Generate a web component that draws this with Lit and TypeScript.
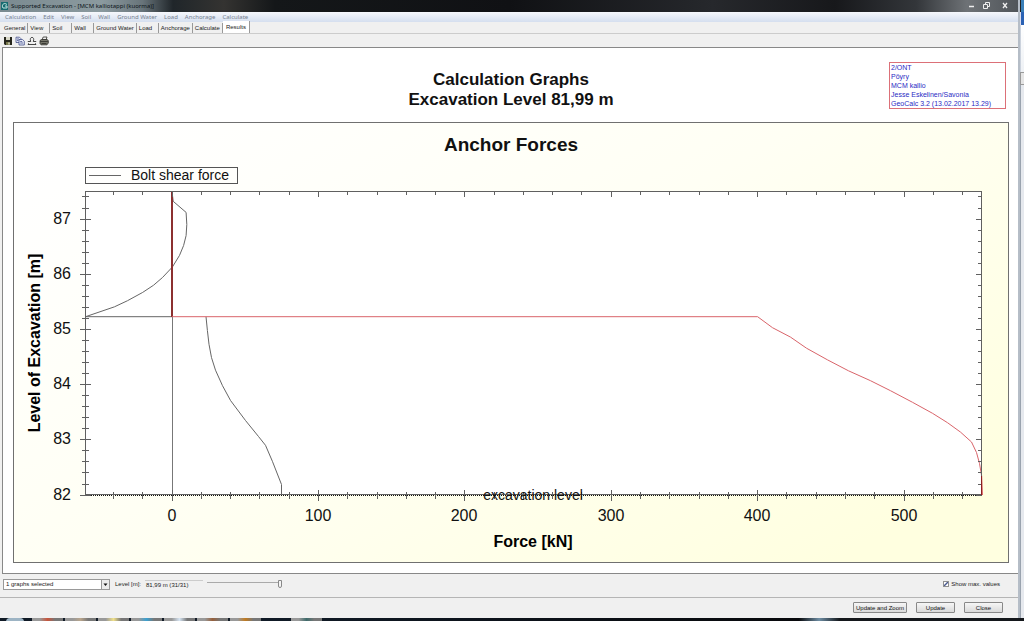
import { LitElement, html, svg, css } from "lit";
import { customElement, property, state } from "lit/decorators.js";
import { classMap } from "lit/directives/class-map.js";

type Point = [number, number];

const MENU = ["Calculation", "Edit", "View", "Soil", "Wall", "Ground Water", "Load", "Anchorage", "Calculate"];
const TABS = ["General", "View", "Soil", "Wall", "Ground Water", "Load", "Anchorage", "Calculate", "Results"];
const PROJECT = ["2/ONT", "Pöyry", "MCM kallio", "Jesse Eskelinen/Savonia", "GeoCalc 3.2 (13.02.2017 13.29)"];

/* Every point is [force in kN, level in m]. */
const SHEAR_UPPER: Point[] = [
  [0, 87.5], [0.8, 87.32], [9.6, 87.12], [10.1, 86.9], [9.6, 86.7], [7.9, 86.52], [5.1, 86.34],
  [0.3, 86.13], [-6.5, 85.94], [-12.6, 85.8], [-20, 85.67], [-30.4, 85.52], [-39.3, 85.41],
  [-59, 85.23], [0, 85.23],
];
const SHEAR_LOWER: Point[] = [
  [23.2, 85.23], [24.2, 84.98], [25.3, 84.73], [27, 84.49], [29.7, 84.26], [34.5, 83.98], [40, 83.71],
  [50.2, 83.35], [59.1, 83.06], [63.9, 82.9], [68.6, 82.61], [74.8, 82.19], [74.8, 82],
];
const ANCHOR_LIMIT: Point[] = [
  [0, 85.23], [400, 85.23], [410.2, 85.03], [422.5, 84.86], [433.4, 84.66], [447.7, 84.45],
  [462.1, 84.25], [477.1, 84.07], [490.8, 83.89], [505.8, 83.68], [519.5, 83.48], [529.7, 83.31],
  [538.6, 83.14], [546.1, 82.96], [549.5, 82.77], [551.6, 82.57], [553.1, 82.34], [553.6, 82],
];

const LEFT = 71;
const RIGHT = 968;
const TOP = 7;
const BOTTOM = 310;
const px = (kn: number) => Math.round((158 + kn * 1.464) * 10) / 10;
const py = (m: number) => Math.round((BOTTOM - (m - 82) * 55.2) * 10) / 10;
const line = (points: Point[]) => points.map(([kn, m]) => `${px(kn)},${py(m)}`).join(" ");
const snap = (n: number) => Math.round(n - 0.5);

@customElement("force-chart")
export class ForceChart extends LitElement {
  static styles = css`
    :host { display: block; }
    .plot { display: block; width: 100%; height: auto; font-family: "Liberation Sans", Arial, sans-serif; }
    .area { fill: #fff; }
    .axis { stroke: #606060; fill: none; shape-rendering: crispEdges; }
    .zero { stroke: #777; shape-rendering: crispEdges; }
    .base { stroke: #111; stroke-dasharray: 1 1; shape-rendering: crispEdges; }
    .shear { fill: none; stroke: #666; }
    .limit { fill: none; stroke: #d9646a; }
    .wall { stroke: #8c3030; stroke-width: 2; shape-rendering: crispEdges; }
    .end { stroke: #8c2020; shape-rendering: crispEdges; }
    .tick { font-size: 16px; fill: #111; }
    .name { font-size: 16px; font-weight: bold; fill: #000; text-anchor: middle; }
    .note { font-size: 14px; fill: #111; text-anchor: middle; }
    .x { text-anchor: middle; }
    .y { text-anchor: end; }
  `;

  private xTicks() {
    const out = [];
    for (let kn = -40; kn <= 540; kn += 20) {
      const major = kn % 100 === 0;
      const at = snap(px(kn)) + 0.5;
      const r = major ? 5 : 3;
      out.push(svg`<path class="axis" d="M${at} ${BOTTOM - r}V${BOTTOM + r + 1}M${at} ${TOP}v${major ? 5 : 3}" />`);
      if (major) out.push(svg`<text class="tick x" x=${snap(px(kn))} y="336">${kn}</text>`);
    }
    return out;
  }

  private yTicks() {
    const out = [];
    for (let i = 0; i <= 27; i++) {
      const m = 82 + i / 5;
      const major = i % 5 === 0;
      const at = snap(py(m)) + 0.5;
      const r = major ? 5 : 3;
      out.push(svg`<path class="axis" d="M${LEFT - r} ${at}H${LEFT + r + 1}M${RIGHT} ${at}h${-r - 1}" />`);
      if (major) out.push(svg`<text class="tick y" x="57" y=${snap(py(m)) + 5}>${m}</text>`);
    }
    return out;
  }

  render() {
    return html`
      <svg class="plot" viewBox="0 0 994 377" role="img" aria-label="Anchor Forces">
        <rect class="area" x=${LEFT} y=${TOP} width=${RIGHT - LEFT} height=${BOTTOM - TOP} />
        <path class="zero" d="M158 ${TOP}V${BOTTOM}" />
        <polyline class="shear" points=${line(SHEAR_UPPER)} />
        <polyline class="shear" points=${line(SHEAR_LOWER)} />
        <path class="wall" d="M158 ${TOP}V${py(85.23)}" />
        <polyline class="limit" points=${line(ANCHOR_LIMIT)} />
        <path class="axis" d="M${LEFT + 0.5} ${BOTTOM}V${TOP - 0.5}H${RIGHT - 0.5}V${BOTTOM}" />
        <path class="axis" d="M${LEFT} ${BOTTOM - 0.5}H${RIGHT}" />
        <path class="base" d="M${LEFT} ${BOTTOM + 0.5}H${RIGHT}" />
        ${this.xTicks()} ${this.yTicks()}
        <path class="end" d="M${RIGHT - 0.5} ${py(82.34)}V${BOTTOM}" />
        <text class="note" x="519" y="315">excavation level</text>
        <text class="name" x="519" y="362">Force [kN]</text>
        <text class="name" transform="translate(26 158) rotate(-90)">Level of Excavation [m]</text>
      </svg>
    `;
  }
}

@customElement("tool-bar")
export class ToolBar extends LitElement {
  static styles = css`
    :host { display: flex; align-items: center; gap: 2px; height: 13px; padding: 0 3px; }
    .tool { display: block; width: 10px; height: 10px; padding: 0; border: 0; background: none; }
    .glyph { display: block; width: 10px; height: 10px; }
  `;

  render() {
    return html`
      <button class="tool" aria-label="Save">
        <svg class="glyph" viewBox="0 0 10 10">
          <path d="M1 1h8v8H2L1 8z" fill="#26261c" />
          <path d="M3 1h4v3H3z" fill="#d8d8c8" />
          <path d="M3 6h4v3H3z" fill="#77774a" /><path d="M5.500 6.500h1v2h-1z" fill="#fff" />
        </svg>
      </button>
      <button class="tool" aria-label="Copy">
        <svg class="glyph" viewBox="0 0 10 10" fill="#e8ebf8" stroke="#45508c" stroke-width=".8">
          <path d="M1 1.200h3.500L6 2.700V6.500H1z" /><path d="M4 3.500h3.500L9.300 5.200V9H4z" />
          <path d="M2 3h2M2 4.500h1.500M5.200 5.500h2M5.200 7h3" />
        </svg>
      </button>
      <button class="tool" aria-label="Scale">
        <svg class="glyph" viewBox="0 0 10 10" fill="none" stroke="#333">
          <path d="M3.700 5.500C1.500 0 8.500 0 6.300 5.500M.8 5.500h3M6.200 5.500h3M.8 8.500h8.400M1.500 7.300v1.500M8.500 7.300v1.500" stroke-width=".9" />
        </svg>
      </button>
      <button class="tool" aria-label="Print">
        <svg class="glyph" viewBox="0 0 10 10" stroke="#2d2d28" stroke-width=".8">
          <path d="M3 4l1.200-3H8L7 4z" fill="#eee" />
          <path d="M1 4.500L2.500 3.500H8l1.300 1V7L8 8.800H2L1 7.500z" fill="#77776c" />
          <path d="M1.300 5.500h7.500M2.500 7.500h5" />
        </svg>
      </button>
    `;
  }
}

@customElement("option-bar")
export class OptionBar extends LitElement {
  @property({ type: Number }) level = 31;

  static styles = css`
    :host { display: flex; align-items: center; gap: 4px; height: 20px; padding: 0 18px 3px 3px; border-bottom: 1px solid #b5b5b5; font-size: 6px; line-height: 8px; }
    .pick { display: grid; width: 107px; height: 11px; }
    .list { grid-area: 1 / 1; appearance: none; width: 100%; height: 11px; padding: 0 10px 0 2px; margin: 0; border: 1px solid #999; border-radius: 0; background: #fff; color: #222; font: inherit; }
    .arrow { grid-area: 1 / 1; justify-self: end; width: 9px; height: 11px; pointer-events: none; }
    .label { padding-left: 1px; }
    .value { width: 56px; padding: 0 1px; border-top: 1px solid #ccc; }
    .range { appearance: none; width: 75px; height: 10px; margin: 0; background: linear-gradient(#aaa, #aaa) 0 3px / 100% 1px no-repeat; }
    .range::-webkit-slider-thumb { appearance: none; width: 4px; height: 8px; border: 1px solid #888; border-radius: 0 0 2px 2px; background: #f4f4f4; box-sizing: border-box; }
    .max { display: flex; align-items: center; gap: 2px; margin-left: auto; }
    .box { appearance: none; width: 6px; height: 6px; margin: 0; border: 1px solid #909090; background: #fff; }
    .box:checked { background: linear-gradient(135deg, #fff 30%, #4a5a90 45%, #4a5a90 55%, #fff 70%); }
  `;

  render() {
    return html`
      <div class="pick">
        <select class="list" aria-label="Graphs"><option>1 graphs selected</option></select>
        <svg class="arrow" viewBox="0 0 9 11">
          <rect x=".5" y=".5" width="8" height="10" fill="#ececec" stroke="#999" />
          <path d="M2.500 4.500h4L4.500 7z" fill="#111" />
        </svg>
      </div>
      <label class="label" for="level">Level [m]:</label>
      <output class="value" for="level">81,99 m (${this.level}/31)</output>
      <input class="range" id="level" type="range" min="1" max="31" .value=${String(this.level)}
        @input=${(e: Event) => (this.level = Number((e.target as HTMLInputElement).value))} />
      <label class="max"><input class="box" type="checkbox" checked />Show max. values</label>
    `;
  }
}

@customElement("app-root")
export class AppRoot extends LitElement {
  @state() private tab = "Results";

  static styles = css`
    :host { display: grid; grid-template-columns: minmax(0, 1fr) 6px; grid-template-rows: minmax(0, 1fr) auto; min-height: 100vh; background: #f0f0f0; color: #222; font-family: "Liberation Sans", Arial, sans-serif; font-size: 6px; line-height: 8px; }
    .window { display: flex; flex-direction: column; min-width: 0; }
    .title { display: flex; align-items: center; gap: 3px; height: 12px; padding-left: 1px; color: #0c1418; background: linear-gradient(90deg, #7a8a90 0, #8b9a9f 10%, #68747a 14%, #20262a 17%, #343331 22%, #141719 27%, #101114 50%, #26282c 70%, #17181b 82%, #33363a 90%, #6e7276 95%, #50555a 100%); }
    .logo { width: 7px; height: 8px; }
    .caption { flex: 1; font-family: "Noto Sans", sans-serif; font-size: 6px; font-weight: normal; margin: 0; }
    .controls { display: flex; padding-right: 5px; }
    .control { width: 16px; height: 11px; padding: 0; border: 0; background: none; }
    .control svg { display: block; width: 16px; height: 11px; }
    .menu { display: flex; align-items: center; gap: 7px; height: 10px; padding-left: 5px; background: linear-gradient(#f6f8fc, #d5dfef); font-family: "Noto Sans", sans-serif; }
    .entry { padding: 0; border: 0; background: none; color: #75808f; font: inherit; }
    .tabs { display: flex; align-items: flex-end; height: 12px; padding-left: 2px; border-bottom: 1px solid #ccc; box-sizing: border-box; }
    .tab { min-width: 22px; height: 10px; padding: 0 2px; border: 0; border-right: 1px solid #999; background: none; color: #222; font: inherit; text-align: left; }
    .current { height: 12px; padding: 0 3px; background: #fff; }
    .page { flex: 1; display: flex; flex-direction: column; margin-left: 2px; padding: 14px 9px 10px 10px; background: #fff; border: 1px solid #888; border-width: 1px 0 1px 1px; }
    .head { display: grid; grid-template-columns: 1fr auto 1fr; align-items: start; padding: 0 3px 12px; }
    .heading { grid-column: 2; margin: 0; padding-top: 8px; color: #111; font-size: 17px; line-height: 20px; text-align: center; }
    .project { justify-self: end; box-sizing: border-box; width: 117px; margin: 0; padding: 0 1px; border: 1px solid #dc7078; color: #2a2ac4; font-size: 7px; font-style: normal; line-height: 9px; white-space: nowrap; }
    .panel { margin: 0; border: 1px solid #707070; background: linear-gradient(150deg, #fff 5%, #fffff4 45%, #ffffe0 90%); }
    .subject { margin: 0; padding: 10px 0; color: #111; font-size: 19px; line-height: 24px; text-align: center; }
    .legend { display: flex; align-items: center; gap: 10px; width: fit-content; margin: 0 71px 1px; padding: 0 8px 0 3px; border: 1px solid #555; color: #111; font-size: 14px; line-height: 15px; }
    .swatch { width: 32px; border-top: 1px solid #666; }
    .actions { display: flex; justify-content: flex-end; gap: 9px; padding: 4px 15px 5px; }
    .action { min-width: 39px; height: 11px; padding: 0 2px; border: 1px solid #888; border-radius: 1px; background: linear-gradient(#f6f6f6, #dadada); color: #111; font: inherit; line-height: 8px; }
    .edge { display: grid; grid-template-rows: 12px 13px 47px 13px 1fr; border-left: 2px solid #b5bdc7; }
    .dark { background: #3a7fb8; border-left: 1px solid #222; }
    .blue { background: #2b62b4; border-left: 1px solid #dde; }
    .pale { background: linear-gradient(#fff, #eef1f5); border-left: 1px solid #ccd3dd; }
    .thumb { background: #e5e5e5; border: 1px solid #999; border-right: 0; }
    .rail { background: #e6e9ee; border-left: 1px solid #9aa3ae; }
    .taskbar { grid-column: 1 / -1; display: flex; gap: 2px; height: 4px; padding-left: 6px; background: linear-gradient(90deg, #101a26 0 26%, #08090c 78%, #6f8ea4 80%, #14171b 82%); }
    .start { width: 18px; margin-right: 6px; border-radius: 9px 9px 0 0; background: #9db4c4; }
    .task { width: 31px; background: linear-gradient(90deg, #999 25%, var(--tint), #777 75%); }
    .red { --tint: #c8553c; } .sand { --tint: #b9a58c; } .yellow { --tint: #f0e08a; }
    .sky { --tint: #3ba0d0; } .ice { --tint: #d6e4f2; } .rust { --tint: #96603c; }
    .orange { --tint: #c07a20; } .teal { --tint: #3f6b6b; margin-left: 28px; }
  `;

  render() {
    return html`
      <div class="window">
        <header class="title">
          <svg class="logo" viewBox="0 0 7 8"><path d="M0 0h7v8H0z" fill="#176b70" /><path d="M6 2.500C3 0 0 3 2 6h4V4H4" fill="none" stroke="#bfe4df" /></svg>
          <h1 class="caption">Supported Excavation - [MCM kalliotappi (kuorma)]</h1>
          <div class="controls">
            <button class="control" aria-label="Minimize"><svg viewBox="0 0 16 11"><path d="M4 5.500h5" stroke="#eee" stroke-width="1.500" /></svg></button>
            <button class="control" aria-label="Restore"><svg viewBox="0 0 16 11" fill="none" stroke="#eee"><path d="M2.500 3.500h4v4h-4zM4.500 3V1.500h4v4H7" /></svg></button>
            <button class="control" aria-label="Close window"><svg viewBox="0 0 16 11"><path d="M6 2l4 5M10 2l-4 5" stroke="#eee" stroke-width="1.300" /></svg></button>
          </div>
        </header>
        <nav class="menu">${MENU.map((name) => html`<button class="entry">${name}</button>`)}</nav>
        <div class="tabs" role="tablist">
          ${TABS.map((name) => html`<button role="tab" aria-selected=${this.tab === name}
            class=${classMap({ tab: true, current: this.tab === name })}
            @click=${() => (this.tab = name)}>${name}</button>`)}
        </div>
        <tool-bar></tool-bar>
        <main class="page">
          <div class="head">
            <h2 class="heading">Calculation Graphs<br />Excavation Level 81,99 m</h2>
            <address class="project">${PROJECT.map((row) => html`<div>${row}</div>`)}</address>
          </div>
          <figure class="panel">
            <h3 class="subject">Anchor Forces</h3>
            <div class="legend"><span class="swatch"></span>Bolt shear force</div>
            <force-chart></force-chart>
          </figure>
        </main>
        <option-bar></option-bar>
        <footer class="actions">
          <button class="action">Update and Zoom</button>
          <button class="action">Update</button>
          <button class="action">Close</button>
        </footer>
      </div>
      <div class="edge">
        <div class="dark"></div><div class="blue"></div><div class="pale"></div><div class="thumb"></div><div class="rail"></div>
      </div>
      <div class="taskbar">
        <span class="start"></span>
        ${["red", "sand", "yellow", "sky", "ice", "rust", "orange", "teal"].map((tint) => html`<span class="task ${tint}"></span>`)}
      </div>
    `;
  }
}
